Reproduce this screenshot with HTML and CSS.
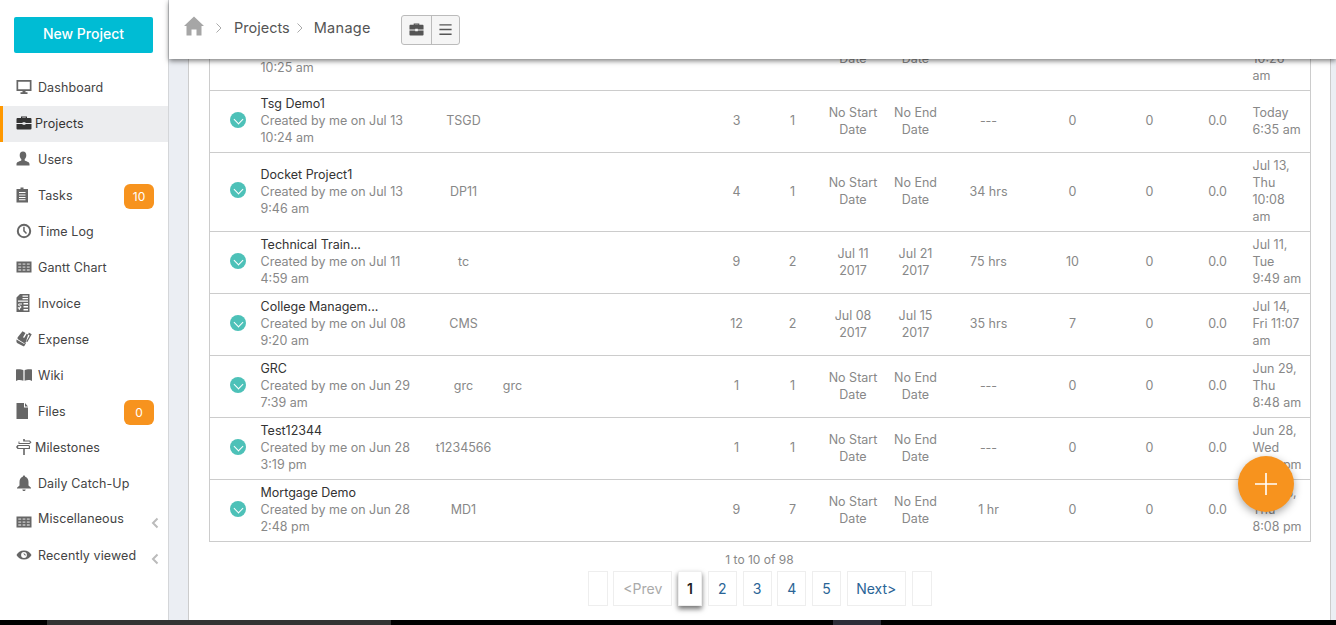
FILE: index.html
```html
<!DOCTYPE html>
<html lang="en">
<head>
  <meta charset="UTF-8" />
  <title>Projects - Manage</title>
  <link rel="stylesheet" href="styles.css">
</head>
<body>
  <div class="app">
    <div class="shell">
      <aside class="sidebar">
        <a class="new-project">New Project</a>
        <ul class="nav">
          <li class="nav-item"><svg class="nav-icon" viewBox="0 0 16 16"><path d="M.5 1h15v11H.5zM2.200 2.700v7.600h11.600V2.700zM6.500 12h3v1.300h2V15h-7v-1.700h2z" fill-rule="evenodd"/></svg>Dashboard</li>
          <li class="nav-item active tight"><svg class="nav-icon dark" viewBox="0 0 16 16"><path d="M5 3V1.600h6V3h3.600c.5 0 .9.4.9.9V8H9.400v-.8H6.600V8H.5V3.900c0-.5.4-.9.9-.9zM6.200 3h3.600v-.4H6.200zM.5 9h6.100v.8h2.800V9h6.100v4.600c0 .5-.4.9-.9.9H1.400c-.5 0-.9-.4-.9-.9z"/></svg>Projects</li>
          <li class="nav-item"><svg class="nav-icon" viewBox="0 0 16 16"><path d="M7 .5c2.200 0 3.300 1.700 3.300 3.700 0 1.700-.7 3.100-1.600 3.900v1.300c.9.600 4.800 1.200 4.800 3.600v1.500H.5V13c0-2.400 3.900-3 4.800-3.600V8.100C4.400 7.300 3.700 5.900 3.700 4.200 3.700 2.200 4.800.5 7 .5z"/></svg>Users</li>
          <li class="nav-item"><svg class="nav-icon" viewBox="0 0 16 16"><path d="M4.500 2V.5h3V2H12v13.500H.5V2zM3 5v1h6.500V5zm0 2.500v1h6.500v-1zM3 10v1h6.500v-1zm0 2.200v1h6.500v-1z" fill-rule="evenodd"/></svg>Tasks<span class="badge">10</span></li>
          <li class="nav-item"><svg class="nav-icon" viewBox="0 0 16 16"><circle cx="8" cy="8" r="6.200" fill="none" stroke="#666" stroke-width="2"/><path d="M7.200 3.800h1.500v3.800l2.300 2.300-1 1-2.800-2.700z"/></svg>Time Log</li>
          <li class="nav-item"><svg class="nav-icon" viewBox="0 0 16 16"><rect x="1" y="3" width="14" height="10" fill="#b0b0b0"/><path d="M.5 2.500h15v11H.5zM2.300 4.300v1.800h2.900V4.300zm4.300 0v1.800h2.800V4.300zm4.200 0v1.800h2.900V4.300zM2.300 7.200V9h2.900V7.200zm4.300 0V9h2.800V7.200zm4.200 0V9h2.900V7.200zM2.300 10.100v1.800h2.900v-1.800zm4.300 0v1.800h2.800v-1.800zm4.200 0v1.800h2.900v-1.800z" fill-rule="evenodd"/></svg>Gantt Chart</li>
          <li class="nav-item"><svg class="nav-icon tall" viewBox="0 0 14 18"><path d="M4 0H13.500V18H.5V3.500zM6.500 1.500v1.300h5.500V1.500zM6.500 4v1.300h5.500V4zM2 6.500v1.200h10V6.500zM7.500 9v1.500h4.500V9zm0 3v1.500h4.500V12zm0 3v1.500h4.500V15zM6 9.500H3.300c-1.300 0-1.500 2-.3 2.500l1.200.5c.5.200.3.800-.2.800H1.800v1.200H2.800v1.200h1.200v-1.200c1.600-.1 1.800-2.200.5-2.700l-1.200-.5c-.4-.2-.3-.7.100-.7H6z" fill-rule="evenodd"/></svg>Invoice</li>
          <li class="nav-item"><svg class="nav-icon" viewBox="0 0 16 16"><path d="M6.500.3l3 1.800-2.200 3.600c-.5.800.7 1.500 1.200.7l2.200-3.600 3 1.800-3.900 6.600c-.5.800-1.500 1.100-2.300.6L2.300 8.500C1.500 8 1.200 7 1.700 6.200zM12.800 1.500l2.900 1.700-4.300 7.800-1.300-.7zM.5 8.500l7.300 4.300 2.500-1.400-1.800 3.300c-.3.500-1 .8-1.600.4L1.500 12.200C.6 11.700.2 10.700.5 8.500z" fill-rule="evenodd"/></svg>Expense</li>
          <li class="nav-item"><svg class="nav-icon" viewBox="0 0 16 16"><path d="M0 2.500C2 2 5.500 2 7.400 3.300v10.500C5.500 12.800 3 12.800 1.500 13.200L0 14zM16 2.500C14 2 10.500 2 8.600 3.300v10.500c1.900-1 4.400-1 5.900-.6L16 14z"/></svg>Wiki</li>
          <li class="nav-item"><svg class="nav-icon" viewBox="0 0 16 16"><path d="M.5 0h7.500v4.500H12V16H.5zM9 0l3 3.500H9z"/></svg>Files<span class="badge">0</span></li>
          <li class="nav-item tight"><svg class="nav-icon" viewBox="0 0 16 16"><path d="M7.200 0h1.600v1.500h5l1.700 1.800-1.700 1.800H2.500V2.500h1l-.1 1.500h9.900l.7-.7-.7-.7H7.200zM1.500 6h12v1.100H2.600l-.8.900.8.900h10.200V7h1.200v3H8.800v6H7.200v-6H1.500L0 8z"/></svg>Milestones</li>
          <li class="nav-item"><svg class="nav-icon" viewBox="0 0 16 16"><path d="M8 .5c.7 0 1.200.5 1.200 1.200C11.500 2.400 12.500 4.400 12.500 7v3.500l2.500 2.200v.8H1v-.8l2.500-2.200V7c0-2.600 1-4.600 3.300-5.300C6.800 1 7.300.5 8 .5zM6.300 14.500h3.400C9.500 15.500 8.800 16 8 16s-1.500-.5-1.700-1.500z"/></svg>Daily Catch-Up</li>
          <li class="nav-item raised"><svg class="nav-icon lower" viewBox="0 0 16 16"><rect x="1" y="3" width="14" height="10" fill="#b0b0b0"/><path d="M.5 2.500h15v11H.5zM2.300 4.300v1.800h2.900V4.300zm4.300 0v1.800h2.800V4.300zm4.200 0v1.800h2.900V4.300zM2.300 7.200V9h2.900V7.200zm4.300 0V9h2.800V7.200zm4.200 0V9h2.900V7.200zM2.300 10.100v1.800h2.900v-1.800zm4.300 0v1.800h2.800v-1.800zm4.200 0v1.800h2.900v-1.800z" fill-rule="evenodd"/></svg><span>Miscellaneous</span><svg class="chevron" viewBox="0 0 8 12"><path d="M6.500 1.500L2 6l4.500 4.500" fill="none" stroke="#bbb" stroke-width="2"/></svg></li>
          <li class="nav-item"><svg class="nav-icon" viewBox="0 0 16 16"><path d="M8 3.500c3.500 0 6.200 2 7.500 4.500-1.300 2.500-4 4.500-7.500 4.500S1.800 10.500.5 8C1.800 5.500 4.500 3.500 8 3.500zm0 1.600a2.900 2.900 0 1 0 0 5.800 2.900 2.900 0 0 0 0-5.800zM8 6.400a1.600 1.600 0 0 1 1.300 2.500L7.200 6.600c.2-.1.500-.2.800-.2z" fill-rule="evenodd"/></svg><span>Recently viewed</span><svg class="chevron" viewBox="0 0 8 12"><path d="M6.500 1.500L2 6l4.500 4.500" fill="none" stroke="#bbb" stroke-width="2"/></svg></li>
        </ul>
      </aside>

      <div class="content">
        <header class="topbar">
          <svg class="home" viewBox="0 0 20 20"><path d="M10 .5l10 9.500h-2.500v9.500h-5v-6h-5v6h-5V10H0z"/></svg>
          <svg class="crumb-sep first" viewBox="0 0 8 12"><path d="M1.500 1.500L6 6l-4.500 4.500" fill="none" stroke="#aaa" stroke-width="1"/></svg>
          <span class="crumb">Projects</span>
          <svg class="crumb-sep" viewBox="0 0 8 12"><path d="M1.500 1.500L6 6l-4.500 4.500" fill="none" stroke="#aaa" stroke-width="1"/></svg>
          <span class="crumb">Manage</span>
          <div class="view-toggle">
            <button class="toggle-btn"><svg viewBox="0 0 16 16"><path d="M5 3V1.600h6V3h3.600c.5 0 .9.4.9.9V8H9.400v-.8H6.600V8H.5V3.900c0-.5.4-.9.9-.9zM6.200 3h3.600v-.4H6.200zM.5 9h6.100v.8h2.800V9h6.100v4.600c0 .5-.4.9-.9.9H1.400c-.5 0-.9-.4-.9-.9z" fill="#555"/></svg></button>
            <button class="toggle-btn"><svg viewBox="0 0 16 16"><path d="M1.500 2.300h13v1.500h-13zM1.500 7.300h13v1.500h-13zM1.500 12.300h13v1.500h-13z" fill="#555"/></svg></button>
          </div>
        </header>

        <main class="workspace">
          <div class="panel">
            <table class="projects">
              <colgroup>
                <col class="c-status"><col class="c-name"><col class="c-code"><col class="c-alias"><col class="c-gap">
                <col class="c-tasks"><col class="c-members"><col class="c-start"><col class="c-end"><col class="c-hours">
                <col class="c-open"><col class="c-issues"><col class="c-spent"><col class="c-updated">
              </colgroup>
              <tbody>
                <tr>
                  <td><span class="check"></span></td>
                  <td class="name"><b>Tsg Demo</b>Created by me on Jul 13<br>10:25 am</td>
                  <td>TSG</td><td></td><td></td><td>3</td><td>1</td>
                  <td>No Start<br>Date</td><td>No End<br>Date</td><td>---</td><td>0</td><td>0</td><td>0.0</td>
                  <td class="updated">Jul 13,<br>Thu<br>10:26<br>am</td>
                </tr>
                <tr>
                  <td><span class="check"></span></td>
                  <td class="name"><b>Tsg Demo1</b>Created by me on Jul 13<br>10:24 am</td>
                  <td>TSGD</td><td></td><td></td><td>3</td><td>1</td>
                  <td>No Start<br>Date</td><td>No End<br>Date</td><td>---</td><td>0</td><td>0</td><td>0.0</td>
                  <td class="updated">Today<br>6:35 am</td>
                </tr>
                <tr>
                  <td><span class="check"></span></td>
                  <td class="name"><b>Docket Project1</b>Created by me on Jul 13<br>9:46 am</td>
                  <td>DP11</td><td></td><td></td><td>4</td><td>1</td>
                  <td>No Start<br>Date</td><td>No End<br>Date</td><td>34 hrs</td><td>0</td><td>0</td><td>0.0</td>
                  <td class="updated">Jul 13,<br>Thu<br>10:08<br>am</td>
                </tr>
                <tr>
                  <td><span class="check"></span></td>
                  <td class="name"><b>Technical Train...</b>Created by me on Jul 11<br>4:59 am</td>
                  <td>tc</td><td></td><td></td><td>9</td><td>2</td>
                  <td>Jul 11<br>2017</td><td>Jul 21<br>2017</td><td>75 hrs</td><td>10</td><td>0</td><td>0.0</td>
                  <td class="updated">Jul 11,<br>Tue<br>9:49 am</td>
                </tr>
                <tr>
                  <td><span class="check"></span></td>
                  <td class="name"><b>College Managem...</b>Created by me on Jul 08<br>9:20 am</td>
                  <td>CMS</td><td></td><td></td><td>12</td><td>2</td>
                  <td>Jul 08<br>2017</td><td>Jul 15<br>2017</td><td>35 hrs</td><td>7</td><td>0</td><td>0.0</td>
                  <td class="updated">Jul 14,<br>Fri 11:07<br>am</td>
                </tr>
                <tr>
                  <td><span class="check"></span></td>
                  <td class="name"><b>GRC</b>Created by me on Jun 29<br>7:39 am</td>
                  <td>grc</td><td>grc</td><td></td><td>1</td><td>1</td>
                  <td>No Start<br>Date</td><td>No End<br>Date</td><td>---</td><td>0</td><td>0</td><td>0.0</td>
                  <td class="updated">Jun 29,<br>Thu<br>8:48 am</td>
                </tr>
                <tr>
                  <td><span class="check"></span></td>
                  <td class="name"><b>Test12344</b>Created by me on Jun 28<br>3:19 pm</td>
                  <td>t1234566</td><td></td><td></td><td>1</td><td>1</td>
                  <td>No Start<br>Date</td><td>No End<br>Date</td><td>---</td><td>0</td><td>0</td><td>0.0</td>
                  <td class="updated">Jun 28,<br>Wed<br>3:30 pm</td>
                </tr>
                <tr>
                  <td><span class="check"></span></td>
                  <td class="name"><b>Mortgage Demo</b>Created by me on Jun 28<br>2:48 pm</td>
                  <td>MD1</td><td></td><td></td><td>9</td><td>7</td>
                  <td>No Start<br>Date</td><td>No End<br>Date</td><td>1 hr</td><td>0</td><td>0</td><td>0.0</td>
                  <td class="updated">Jun 28,<br>Thu<br>8:08 pm</td>
                </tr>
              </tbody>
            </table>

            <p class="page-count">1 to 10 of 98</p>
            <nav class="pager">
              <a class="page blank"></a>
              <a class="page wide off">&lt;Prev</a>
              <a class="page current">1</a>
              <a class="page">2</a>
              <a class="page">3</a>
              <a class="page">4</a>
              <a class="page">5</a>
              <a class="page wide">Next&gt;</a>
              <a class="page blank"></a>
            </nav>
          </div>
        </main>
      </div>
    </div>

    <div class="taskbar">
      <span class="task-a"></span>
      <span class="task-b"></span>
    </div>
  </div>

  <button class="fab"><svg viewBox="0 0 22 22"><path d="M10.200 0h1.600v10.200H22v1.600H11.800V22h-1.600V11.800H0v-1.600h10.200z" fill="#fff"/></svg></button>
</body>
</html>
```

FILE: styles.css
```css
* {
  box-sizing: border-box;
}

body {
  margin: 0;
  font-family: "Inter", "Noto Sans", sans-serif;
  font-size: 12.5px;
  color: #888;
  background: #fff;
  overflow: hidden;
}

.app {
  display: flex;
  flex-direction: column;
  height: 625px;
}

.shell {
  display: flex;
  flex: 1;
  min-height: 0;
}

/* sidebar */
.sidebar {
  width: 169px;
  flex: none;
  background: #fff;
  border-right: 1px solid #d4d6d9;
  padding-top: 17px;
}

.new-project {
  display: block;
  width: 139px;
  height: 36px;
  margin-left: 14px;
  border-radius: 2px;
  background: #00bcd4;
  color: #fff;
  font-size: 14px;
  font-weight: 500;
  line-height: 34px;
  text-align: center;
}

.nav {
  list-style: none;
  margin: 17px 0 0;
  padding: 0;
}

.nav-item {
  position: relative;
  display: flex;
  align-items: center;
  height: 36px;
  padding: 0 0 2px 16px;
  color: #444;
  letter-spacing: 0.1px;
}

.nav-item.active {
  background: #ecedef;
  color: #333;
  box-shadow: inset 3px 0 0 #ff9800;
}

.nav-icon {
  width: 16px;
  height: 16px;
  margin-right: 6px;
  flex: none;
  fill: #666;
}

.nav-icon.dark {
  fill: #333;
}

.nav-icon.tall {
  width: 14px;
  height: 18px;
  margin-right: 8px;
}

.nav-icon.lower {
  position: relative;
  top: 3px;
}

.tight .nav-icon {
  margin-right: 3px;
}

.raised > span {
  position: relative;
  top: -1px;
}

.badge {
  position: relative;
  top: 1px;
  margin-left: auto;
  margin-right: 14px;
  width: 30px;
  height: 25px;
  border-radius: 6px;
  background: #f7931e;
  color: #fff;
  font-size: 12px;
  line-height: 25px;
  text-align: center;
}

.chevron {
  position: absolute;
  left: 151px;
  top: 15px;
  width: 8px;
  height: 12px;
}

/* top bar */
.content {
  flex: 1;
  min-width: 0;
  display: flex;
  flex-direction: column;
}

.topbar {
  position: relative;
  z-index: 2;
  display: flex;
  align-items: center;
  flex: none;
  height: 59px;
  padding-left: 15px;
  background: #fff;
  box-shadow: 0 2px 5px rgba(0, 0, 0, 0.5);
}

.home {
  width: 20px;
  height: 20px;
  margin-bottom: 8px;
  fill: #a6a6a6;
}

.crumb-sep {
  width: 8px;
  height: 12px;
  margin: 0 10px 3px 6px;
}

.crumb-sep.first {
  margin: 0 11px 3px 11px;
}

.crumb {
  margin-bottom: 5px;
  font-size: 14.5px;
  color: #555;
}

.crumb:last-of-type {
  letter-spacing: 0.3px;
}

.view-toggle {
  display: flex;
  height: 30px;
  margin-left: 30px;
  border: 1px solid #bbb;
  border-radius: 3px;
  background: #f5f5f5;
}

.toggle-btn {
  display: flex;
  align-items: center;
  justify-content: center;
  width: 29px;
  padding: 0;
  border: 0;
  background: none;
}

.toggle-btn + .toggle-btn {
  width: 28px;
  border-left: 1px solid #bbb;
}

.toggle-btn svg {
  width: 15px;
  height: 15px;
}

/* table area */
.workspace {
  flex: 1;
  min-height: 0;
  overflow: hidden;
  padding: 0 5px 0 19px;
  background: #ebeef3;
}

.panel {
  display: flow-root;
  height: 100%;
  padding: 0 20px;
  background: #fff;
  border-left: 1px solid #ccc;
  border-right: 1px solid #ccc;
}

.projects {
  width: 1101px;
  margin-top: -47px;
  border-collapse: collapse;
  table-layout: fixed;
  border-left: 1px solid #ccc;
  border-right: 1px solid #ccc;
  line-height: 17px;
}

.projects td {
  padding: 4px 0 6px;
  border-bottom: 1px solid #ccc;
  text-align: center;
  vertical-align: middle;
}

.projects .name,
.projects .updated {
  text-align: left;
  white-space: nowrap;
}

.name b {
  display: block;
  font-weight: 400;
  color: #333;
}

.check {
  display: inline-block;
  width: 16px;
  height: 16px;
  margin: 0 0 2px 5px;
  vertical-align: middle;
  border-radius: 50%;
  background: #4dc1b8;
  position: relative;
}

.check::after {
  content: "";
  position: absolute;
  left: 5px;
  top: 4px;
  width: 6px;
  height: 6px;
  border-right: 1px solid #fff;
  border-bottom: 1px solid #fff;
  transform: rotate(45deg);
}

.c-status { width: 51px; }
.c-name { width: 170px; }
.c-code { width: 66px; }
.c-alias { width: 32px; }
.c-gap { width: 179px; }
.c-tasks { width: 58px; }
.c-members { width: 54px; }
.c-start { width: 67px; }
.c-end { width: 58px; }
.c-hours { width: 88px; }
.c-open { width: 80px; }
.c-issues { width: 74px; }
.c-spent { width: 62px; }
.c-updated { width: 62px; }

.projects .updated {
  padding-left: 4px;
}

/* pagination */
.page-count {
  margin: 9px 0 3px;
  line-height: 17px;
  text-align: center;
  font-size: 12px;
}

.pager {
  display: flex;
  justify-content: center;
  gap: 5.75px;
}

.page {
  width: 29px;
  height: 35px;
  border: 1px solid #eee;
  color: #2a6496;
  font-size: 14px;
  line-height: 33px;
  text-align: center;
}

.page.blank {
  width: 20px;
}

.page.wide {
  width: 59px;
}

.page.off {
  color: #aaa;
}

.page.current {
  width: 24px;
  color: #222;
  font-weight: 600;
  box-shadow: 0 3px 5px rgba(0, 0, 0, 0.55);
}

/* bottom strip */
.taskbar {
  display: flex;
  flex: none;
  height: 5px;
  background: #000;
}

.task-a {
  width: 344px;
  margin-left: 47px;
  background: #333;
}

.task-b {
  width: 48px;
  margin-left: 442px;
  background: #2d2d38;
}

/* floating add button */
.fab {
  position: fixed;
  left: 1238px;
  top: 456px;
  display: flex;
  align-items: center;
  justify-content: center;
  width: 56px;
  height: 56px;
  padding: 0;
  border: 0;
  border-radius: 50%;
  background: #f7931e;
  box-shadow: 0 3px 8px rgba(0, 0, 0, 0.35);
}

.fab svg {
  width: 22px;
  height: 22px;
}
```
